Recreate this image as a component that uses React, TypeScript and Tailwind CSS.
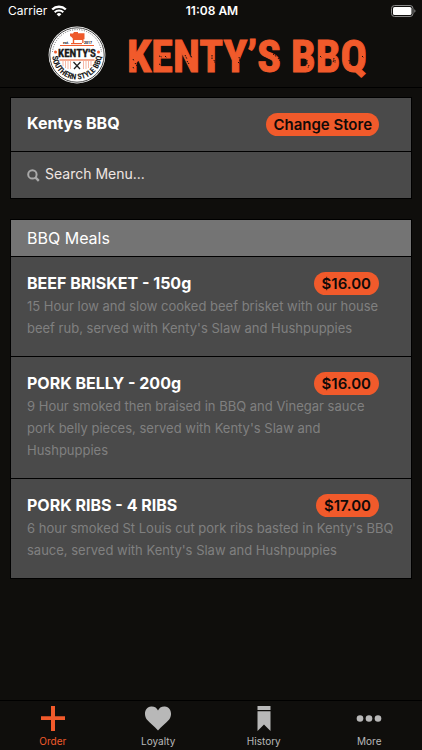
const meals = [
  {
    name: "BEEF BRISKET - 150g",
    price: "$16.00",
    description:
      "15 Hour low and slow cooked beef brisket with our house beef rub, served with Kenty's Slaw and Hushpuppies",
  },
  {
    name: "PORK BELLY - 200g",
    price: "$16.00",
    description:
      "9 Hour smoked then braised in BBQ and Vinegar sauce pork belly pieces, served with Kenty's Slaw and Hushpuppies",
  },
  {
    name: "PORK RIBS - 4 RIBS",
    price: "$17.00",
    description:
      "6 hour smoked St Louis cut pork ribs basted in Kenty's BBQ sauce, served with Kenty's Slaw and Hushpuppies",
  },
];

function WifiIcon() {
  return (
    <svg width="16" height="12" viewBox="0 0 16 12" fill="none" stroke="#fff" aria-hidden="true">
      <path d="M1.2 4.5a9.8 9.8 0 0 1 13.6 0" strokeWidth="2.4" />
      <path d="M3.7 7.2a6.1 6.1 0 0 1 8.6 0" strokeWidth="2" />
      <path d="M8 11.6 5.6 9.2a3.4 3.4 0 0 1 4.8 0z" fill="#fff" stroke="none" />
    </svg>
  );
}

function BatteryIcon() {
  return (
    <svg width="25" height="12" viewBox="0 0 25 12" aria-hidden="true">
      <rect x="0.5" y="0.5" width="21.5" height="11" rx="3" fill="none" stroke="#8a8a8a" />
      <rect x="2" y="2" width="18.5" height="8" rx="1.6" fill="#fff" />
      <path d="M23.3 4.2c1.6.6 1.6 3 0 3.6z" fill="#8a8a8a" />
    </svg>
  );
}

function Badge() {
  return (
    <svg width="58" height="58" viewBox="0 0 58 58" role="img" aria-label="Kenty's Southern Style BBQ">
      <defs>
        <path id="ring" d="M5 23a24.700 24.700 0 1 0 48 0" />
      </defs>
      <circle cx="29" cy="29" r="28.4" fill="#fff" />
      <circle cx="29" cy="29" r="27.2" fill="none" stroke="#333" strokeWidth="0.9" />
      <path d="M4.500 26a24.600 24.600 0 0 1 49 0" fill="none" stroke="#444" strokeWidth="0.8" strokeDasharray="1 1.4" />
      <g fill="#ee5a2b">
        <path d="M22 7.500h3l1-1.500h4v1.200h6.500v6h-1V17h-1.300v-3h-8v3h-1.400v-4.500l-1.300-1.600L22 10z" />
        <path d="M23 17h11v1.200H23z" />
        <path d="M12 19h34v.9H12zM11.500 33.500h35v.9h-35z" />
        <circle cx="7.500" cy="26" r="1.500" />
        <circle cx="50.500" cy="26" r="1.500" />
      </g>
      <path
        d="M15 35v5M17.500 35v7M20 35v8M22.500 35v8M35.500 35v8M38 35v8M40.500 35v7M43 35v5"
        stroke="#f3a58d"
        strokeWidth="0.8"
      />
      <path d="m25.500 36 6.500 7m.500-7-6.500 7" stroke="#222" strokeWidth="1.300" />
      <g fontFamily="Roboto Condensed, Liberation Sans Narrow, sans-serif" fontWeight="700" fill="#1a1a1a">
        <text x="15" y="17.500" fontSize="4">
          est.
        </text>
        <text x="36" y="17.500" fontSize="4">
          2017
        </text>
        <text x="29" y="31" textAnchor="middle" fontSize="11" stroke="#1a1a1a" strokeWidth="0.3">
          KENTY'S
        </text>
        <text fontSize="8">
          <textPath href="#ring" startOffset="50%" textAnchor="middle">
            SOUTHERN STYLE BBQ
          </textPath>
        </text>
      </g>
    </svg>
  );
}

function Wordmark() {
  return (
    <svg width="244" height="60" viewBox="0 0 244 60" role="img" aria-label="Kenty's BBQ">
      <text
        x="121"
        y="47"
        textAnchor="middle"
        fontFamily="Roboto Condensed, Liberation Sans Narrow, sans-serif"
        fontSize="44"
        fontWeight="700"
        fill="#f15a2b"
        stroke="#f15a2b"
      >
        KENTY’S BBQ
      </text>
      <path
        d="m7 34 1 2m1 2 2 3m-4 1 1 2m25-13 3 1m3-1 2 2m-8 6 2 1m24-10 2 4m0 2 2 3m2-8 1 2m20-3v4m2 1 1 3m24-6 1 4m-2 1 2 2m33-10 4 3m1 1 3 4m26-2v4m2 1-1 3m12-12 2 2m12 0-1 5m2-3v3m14-3 1 4m12-8 2 2"
        fill="none"
        stroke="#12100e"
        strokeWidth="1"
        strokeDasharray="1.5 1"
      />
    </svg>
  );
}

function SearchIcon() {
  return (
    <svg width="13" height="13" viewBox="0 0 13 13" fill="none" stroke="#a9a9a9" aria-hidden="true">
      <circle cx="5.4" cy="5.4" r="4.2" strokeWidth="2" />
      <path d="m8.6 8.6 3.2 3.2" strokeWidth="2.4" />
    </svg>
  );
}

const tabs = [
  {
    label: "Order",
    active: true,
    icon: <path d="M12 1h4v10.200h10v3.800H16V26h-4V15H2v-3.800h10z" />,
  },
  {
    label: "Loyalty",
    active: false,
    icon: (
      <path d="M14 25.500C11 21.500 6 18.500 2.800 14.500-.5 10 .5 2 7.200 1.500 10.500 1.300 13 3 14 5.500 15 3 17.500 1.300 20.800 1.500c6.700.5 7.700 8.500 4.400 13C22 18.500 17 21.500 14 25.500z" />
    ),
  },
  {
    label: "History",
    active: false,
    icon: <path d="M7.500 1h13v4h-13zM7.500 6.200h13V26L14 19.500 7.500 26z" />,
  },
  {
    label: "More",
    active: false,
    icon: (
      <>
        <circle cx="5" cy="13.500" r="3.300" />
        <circle cx="14" cy="13.500" r="3.300" />
        <circle cx="23" cy="13.500" r="3.300" />
      </>
    ),
  },
];

export default function App() {
  return (
    <div className="flex min-h-screen flex-col bg-[#0f0e0c] font-[Inter,sans-serif] text-white">
      <header className="border-b border-black">
        <div className="grid h-[22px] grid-cols-3 items-center pr-1.5 pl-2 text-xs">
          <div className="flex items-center gap-1">
            <span>Carrier</span>
            <WifiIcon />
          </div>
          <span className="text-center font-semibold">11:08 AM</span>
          <div className="flex justify-end">
            <BatteryIcon />
          </div>
        </div>
        <div className="flex h-[65px] items-center justify-center gap-5 pr-1">
          <Badge />
          <h1>
            <Wordmark />
          </h1>
        </div>
      </header>

      <main className="flex flex-1 flex-col gap-5 px-2.5 pt-[9px]">
        <section className="border border-black bg-[#4a4a4a]">
          <div className="flex h-[54px] items-center justify-between border-b border-black pr-8 pl-4">
            <h2 className="pb-1 text-base font-bold">Kentys BBQ</h2>
            <button className="h-[23px] rounded-full bg-[#f15a2b] px-[7px] text-[15px] leading-[23px] font-semibold text-[#120a08]">
              Change Store
            </button>
          </div>
          <label className="flex h-[46px] items-center gap-[5px] px-4">
            <SearchIcon />
            <input
              type="search"
              aria-label="Search Menu"
              placeholder="Search Menu..."
              className="min-w-0 flex-1 bg-transparent pb-0.5 text-sm text-white outline-none placeholder:text-[#f0e6e2]"
            />
          </label>
        </section>

        <section className="border border-black bg-[#4a4a4a]">
          <h2 className="h-[37px] border-b border-black bg-[#747474] px-4 text-base leading-9">BBQ Meals</h2>
          <ul className="divide-y divide-black">
            {meals.map((meal) => (
              <li key={meal.name} className="px-4 pt-3.5 pb-[17px]">
                <div className="flex h-6 items-end justify-between pr-4">
                  <h3 className="text-base leading-6 font-bold">{meal.name}</h3>
                  <span className="h-[23px] rounded-full bg-[#f15a2b] px-2 text-[15px] leading-[23px] font-semibold text-[#120a08]">
                    {meal.price}
                  </span>
                </div>
                <p className="text-[13px] leading-[22px] text-[#808080]">{meal.description}</p>
              </li>
            ))}
          </ul>
        </section>
      </main>

      <nav className="grid grid-cols-4 border-t border-black pt-1">
        {tabs.map((tab) => (
          <button
            key={tab.label}
            className={
              tab.active
                ? "flex flex-col items-center text-[#f15a2b]"
                : "flex flex-col items-center text-[#b8b8b8]"
            }
          >
            <svg width="28" height="27" viewBox="0 0 28 27" fill="currentColor" aria-hidden="true">
              {tab.icon}
            </svg>
            <span className="h-[18px] text-[10px] leading-[18px]">{tab.label}</span>
          </button>
        ))}
      </nav>
    </div>
  );
}
